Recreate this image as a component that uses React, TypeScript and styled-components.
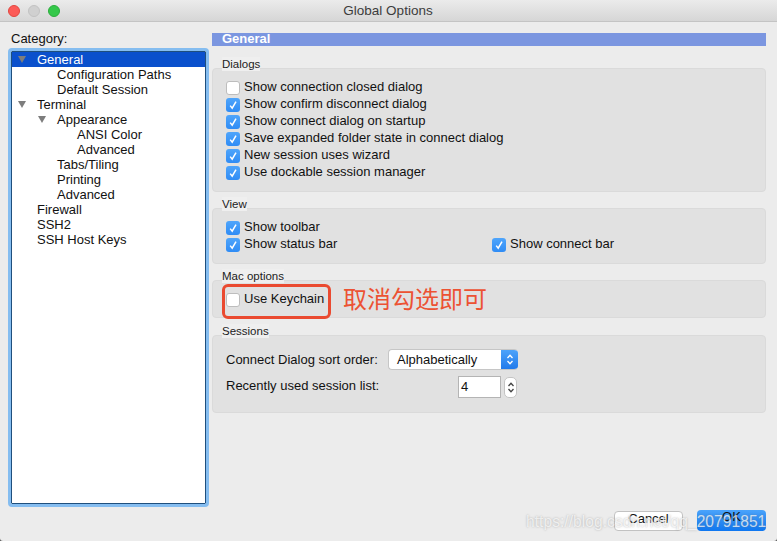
import React from "react";
import styled, { createGlobalStyle } from "styled-components";

const GlobalStyle = createGlobalStyle`
  html, body { margin: 0; padding: 0; background: #5a5a5a; }
  body { font-family: "Liberation Sans", Arial, sans-serif; font-size: 13px; color: #111; }
`;

const Win = styled.div`
  position: relative;
  width: 777px;
  height: 541px;
  overflow: hidden;
  background: #ececec;
  border-radius: 0 0 3px 3px;
  display: flex;
  flex-direction: column;
`;

const TitleBar = styled.div`
  height: 22px;
  flex: none;
  display: flex;
  align-items: center;
  padding-left: 8px;
  gap: 8px;
  background: linear-gradient(#ebebeb, #d6d6d6);
  border-bottom: 1px solid #c4c4c4;
  box-sizing: border-box;
`;

const Light = styled.span<{ $c: string; $b: string }>`
  width: 12px;
  height: 12px;
  box-sizing: border-box;
  border-radius: 50%;
  background: ${(p) => p.$c};
  border: 1px solid ${(p) => p.$b};
`;

const Title = styled.div`
  flex: 1;
  text-align: center;
  font-size: 13.5px;
  color: #3c3c3c;
  padding-right: 69px;
`;

const Body = styled.div`
  flex: 1;
  display: grid;
  grid-template-columns: 198px 554px;
  column-gap: 6px;
  padding: 9px 11px 0 8px;
`;

const Side = styled.div`
  display: flex;
  flex-direction: column;
`;

const CatLabel = styled.div`
  line-height: 15px;
  padding: 0 0 4px 3px;
`;

const TreeBox = styled.div`
  height: 453px;
  width: 195px;
  box-sizing: border-box;
  margin: 1px 0 0 3px;
  background: #fff;
  border: 1px solid #1f4f7d;
  outline: 3px solid #85bdf0;
  border-radius: 1px;
`;

const Row = styled.div<{ $level: number; $sel?: boolean }>`
  height: 15px;
  line-height: 15px;
  display: flex;
  align-items: center;
  padding-left: ${(p) => 25 + p.$level * 20}px;
  position: relative;
  white-space: nowrap;
  background: ${(p) => (p.$sel ? "#0a50cc" : "transparent")};
  color: ${(p) => (p.$sel ? "#fff" : "#111")};
`;

const Arrow = styled.span<{ $level: number }>`
  position: absolute;
  left: ${(p) => 6 + p.$level * 20}px;
  top: 4px;
  width: 0;
  height: 0;
  border-left: 4px solid transparent;
  border-right: 4px solid transparent;
  border-top: 7px solid #7d7d7d;
`;

const Main = styled.div`
  display: flex;
  flex-direction: column;
  padding-top: 2px;
`;

const Banner = styled.div`
  height: 13px;
  line-height: 11px;
  background: #7b96e0;
  color: #fff;
  font-weight: bold;
  padding-left: 10px;
`;

const GroupLabel = styled.div<{ $top: number }>`
  align-self: flex-start;
  position: relative;
  margin: ${(p) => p.$top}px 0 -3px 10px;
  height: 14px;
  line-height: 14px;
  font-size: 11.5px;
  color: #222;
  background: #efefef;
`;

const GroupBox = styled.div<{ $h: number; $pt: number }>`
  height: ${(p) => p.$h}px;
  box-sizing: border-box;
  padding: ${(p) => p.$pt}px 0 0 13px;
  background: #e1e1e1;
  border: 1px solid #dadada;
  border-radius: 4px;
  display: flex;
  flex-direction: column;
`;

const CheckRow = styled.div`
  height: 17px;
  display: flex;
  align-items: center;
`;

const CheckItem = styled.div<{ $w?: number }>`
  display: flex;
  align-items: center;
  gap: 4px;
  width: ${(p) => (p.$w ? `${p.$w}px` : "auto")};
  white-space: nowrap;
`;

const Box = styled.span<{ $on?: boolean }>`
  width: 14px;
  height: 14px;
  box-sizing: border-box;
  margin-top: 2px;
  border-radius: 3px;
  flex: none;
  display: flex;
  align-items: center;
  justify-content: center;
  background: ${(p) => (p.$on ? "linear-gradient(#4fa5fb, #2f8cf5)" : "#fff")};
  border: ${(p) => (p.$on ? "none" : "1px solid #bdbdbd")};
`;

const FormRows = styled.div`
  display: flex;
  flex-direction: column;
  gap: 6px;
`;

const FormRow = styled.div`
  display: flex;
  align-items: center;
  white-space: nowrap;
`;

const FormLabel = styled.div<{ $lift?: boolean }>`
  width: 162px;
  padding-bottom: ${(p) => (p.$lift ? 3 : 0)}px;
`;

const Select = styled.div`
  width: 130px;
  height: 21px;
  box-sizing: border-box;
  background: #fff;
  border: 1px solid #c6c6c6;
  border-right: none;
  border-radius: 4px;
  display: flex;
  align-items: center;
  justify-content: space-between;
  padding-left: 8px;
  line-height: 17px;
  overflow: hidden;
`;

const SelectCap = styled.span`
  width: 17px;
  height: 21px;
  background: linear-gradient(#4fa5fb, #1f78ea);
  display: flex;
  align-items: center;
  justify-content: center;
`;

const NumInput = styled.div`
  width: 43px;
  height: 22px;
  box-sizing: border-box;
  margin-left: 70px;
  background: #fff;
  border: 1px solid #b4b4b4;
  padding-left: 2px;
  line-height: 20px;
`;

const Stepper = styled.span`
  margin-left: 3px;
  width: 13px;
  height: 21px;
  box-sizing: border-box;
  background: #fff;
  border: 1px solid #c4c4c4;
  border-radius: 5px;
  display: flex;
  align-items: center;
  justify-content: center;
`;

const Buttons = styled.div`
  position: absolute;
  right: 11px;
  top: 510px;
  display: flex;
  align-items: center;
  gap: 14px;
`;

const Btn = styled.div<{ $primary?: boolean }>`
  width: 69px;
  height: ${(p) => (p.$primary ? 21 : 20)}px;
  box-sizing: border-box;
  border-radius: 4px;
  line-height: 14px;
  text-align: center;
  background: ${(p) => (p.$primary ? "linear-gradient(#4aa3fb, #0f77f0)" : "#fff")};
  border: ${(p) => (p.$primary ? "none" : "1px solid #c2c2c2")};
`;

const Callout = styled.div`
  position: absolute;
  left: 222px;
  top: 284px;
  width: 109px;
  height: 35px;
  box-sizing: border-box;
  border: 3px solid #ea4a30;
  border-radius: 6px;
`;

const Note = styled.div`
  position: absolute;
  left: 343px;
  top: 284px;
  font-family: "Noto Sans CJK SC", sans-serif;
  font-size: 24px;
  line-height: 28px;
  color: #ec5233;
`;

const Watermark = styled.div`
  position: absolute;
  left: 526px;
  top: 512px;
  font-size: 15.6px;
  letter-spacing: 0.03px;
  line-height: 20px;
  white-space: nowrap;
  color: rgba(255, 255, 255, 0.72);
  text-shadow: 0 0 2px rgba(110, 110, 110, 0.5);
`;

const Tick = () => (
  <svg width="10" height="10" viewBox="0 0 10 10">
    <path d="M2.2 5.6 L4.2 8.2 L8 1.6" fill="none" stroke="#fff" strokeWidth="1.5" />
  </svg>
);

const Chevrons = ({ color }: { color: string }) => (
  <svg width="8" height="15" viewBox="0 0 8 15">
    <path
      d="M1.5 6 L4 3.2 L6.5 6 M1.5 9 L4 11.8 L6.5 9"
      fill="none"
      stroke={color}
      strokeWidth="1.3"
    />
  </svg>
);

const Check = ({ label, on, w }: { label: string; on?: boolean; w?: number }) => (
  <CheckItem $w={w}>
    <Box $on={on}>{on && <Tick />}</Box>
    <span>{label}</span>
  </CheckItem>
);

const tree = [
  { label: "General", level: 0, open: true, sel: true },
  { label: "Configuration Paths", level: 1 },
  { label: "Default Session", level: 1 },
  { label: "Terminal", level: 0, open: true },
  { label: "Appearance", level: 1, open: true },
  { label: "ANSI Color", level: 2 },
  { label: "Advanced", level: 2 },
  { label: "Tabs/Tiling", level: 1 },
  { label: "Printing", level: 1 },
  { label: "Advanced", level: 1 },
  { label: "Firewall", level: 0 },
  { label: "SSH2", level: 0 },
  { label: "SSH Host Keys", level: 0 },
];

const dialogs = [
  { label: "Show connection closed dialog", on: false },
  { label: "Show confirm disconnect dialog", on: true },
  { label: "Show connect dialog on startup", on: true },
  { label: "Save expanded folder state in connect dialog", on: true },
  { label: "New session uses wizard", on: true },
  { label: "Use dockable session manager", on: true },
];

export default function App() {
  return (
    <Win>
      <GlobalStyle />
      <TitleBar>
        <Light $c="#fc5b57" $b="#e2463f" />
        <Light $c="#d0d0d0" $b="#c2c2c2" />
        <Light $c="#34c84a" $b="#2bad3c" />
        <Title>Global Options</Title>
      </TitleBar>
      <Body>
        <Side>
          <CatLabel>Category:</CatLabel>
          <TreeBox>
            {tree.map((t) => (
              <Row key={t.label + t.level} $level={t.level} $sel={t.sel}>
                {t.open && <Arrow $level={t.level} />}
                {t.label}
              </Row>
            ))}
          </TreeBox>
        </Side>
        <Main>
          <Banner>General</Banner>
          <GroupLabel $top={11}>Dialogs</GroupLabel>
          <GroupBox $h={124} $pt={9}>
            {dialogs.map((d) => (
              <CheckRow key={d.label}>
                <Check label={d.label} on={d.on} />
              </CheckRow>
            ))}
          </GroupBox>
          <GroupLabel $top={5}>View</GroupLabel>
          <GroupBox $h={56} $pt={9}>
            <CheckRow>
              <Check label="Show toolbar" on />
            </CheckRow>
            <CheckRow>
              <Check label="Show status bar" on w={266} />
              <Check label="Show connect bar" on />
            </CheckRow>
          </GroupBox>
          <GroupLabel $top={5}>Mac options</GroupLabel>
          <GroupBox $h={38} $pt={9}>
            <CheckRow>
              <Check label="Use Keychain" />
            </CheckRow>
          </GroupBox>
          <GroupLabel $top={6}>Sessions</GroupLabel>
          <GroupBox $h={78} $pt={13}>
            <FormRows>
              <FormRow>
                <FormLabel>Connect Dialog sort order:</FormLabel>
                <Select>
                  Alphabetically
                  <SelectCap>
                    <Chevrons color="#fff" />
                  </SelectCap>
                </Select>
              </FormRow>
              <FormRow>
                <FormLabel $lift>Recently used session list:</FormLabel>
                <NumInput>4</NumInput>
                <Stepper>
                  <Chevrons color="#444" />
                </Stepper>
              </FormRow>
            </FormRows>
          </GroupBox>
        </Main>
      </Body>
      <Callout />
      <Note>取消勾选即可</Note>
      <Buttons>
        <Btn>Cancel</Btn>
        <Btn $primary>OK</Btn>
      </Buttons>
      <Watermark>https://blog.csdn.net/qq_20791851</Watermark>
    </Win>
  );
}
